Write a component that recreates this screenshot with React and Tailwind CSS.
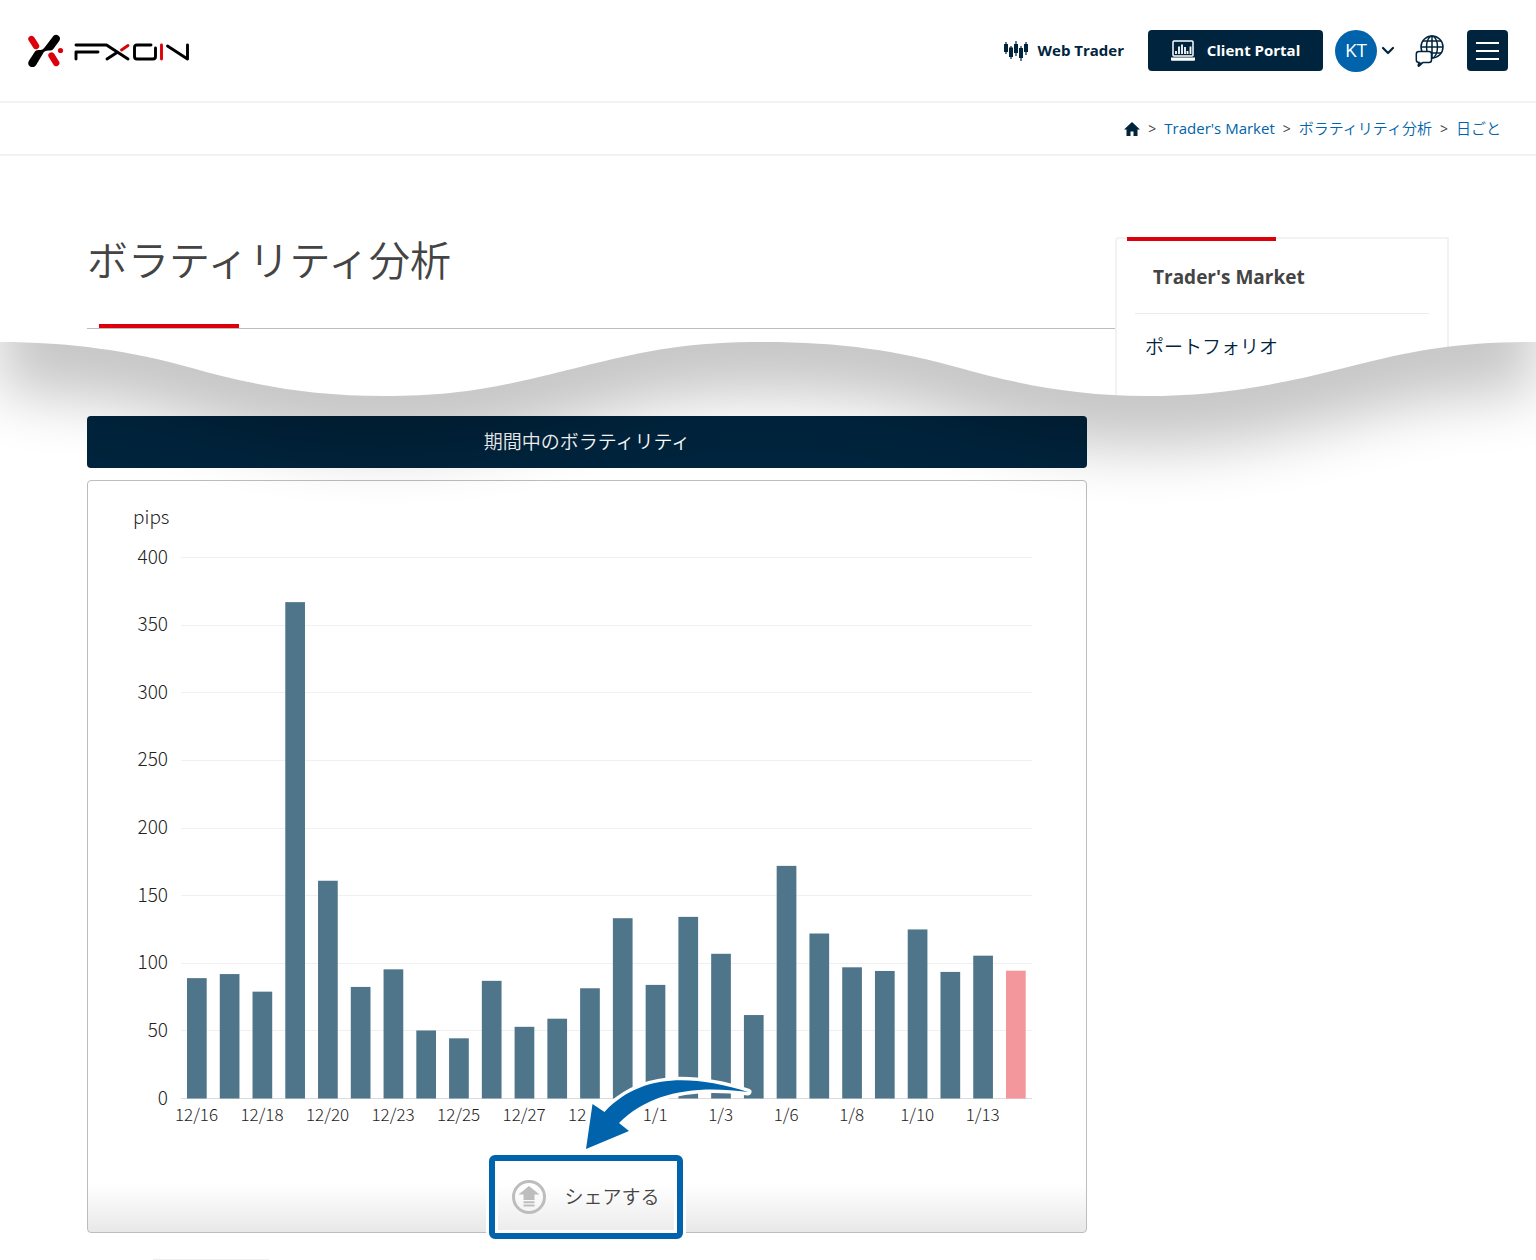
const bars = [
    { date: "12/16", pips: 89 },
    { date: "12/17", pips: 92 },
    { date: "12/18", pips: 79 },
    { date: "12/19", pips: 367 },
    { date: "12/20", pips: 161 },
    { date: "12/21", pips: 82.5 },
    { date: "12/23", pips: 95.5 },
    { date: "12/24", pips: 50.3 },
    { date: "12/25", pips: 44.5 },
    { date: "12/26", pips: 87 },
    { date: "12/27", pips: 53 },
    { date: "12/28", pips: 59 },
    { date: "12/30", pips: 81.5 },
    { date: "12/31", pips: 133.3 },
    { date: "1/1", pips: 84 },
    { date: "1/2", pips: 134.3 },
    { date: "1/3", pips: 107 },
    { date: "1/4", pips: 61.7 },
    { date: "1/6", pips: 172 },
    { date: "1/7", pips: 122 },
    { date: "1/8", pips: 97 },
    { date: "1/9", pips: 94.3 },
    { date: "1/10", pips: 125 },
    { date: "1/11", pips: 93.6 },
    { date: "1/13", pips: 105.6 },
    { date: "1/14", pips: 94.5 },
];

const ticks = [400, 350, 300, 250, 200, 150, 100, 50, 0];

const WAVE = "M0 0 C70 0 132 9 192 26 S310 54 384 54 S500 45 576 26 S690 0 765 0 S900 9 960 26 S1080 54 1146 54 S1270 45 1344 26 S1460 0 1536 0";

const Logo = () => (
    <svg viewBox="0 0 164 34" className="h-[34px] w-[164px]" fill="none" strokeLinecap="round" aria-label="FXON" role="img">
        <path d="M4.500 5l4.500 7" stroke="#dc000c" strokeWidth="6.4" />
        <path d="M24.500 21.5l4.7 7.5" stroke="#dc000c" strokeWidth="6.4" />
        <path d="M25.600 3C27 .8 29.200.2 31.200 1.400C33.400 2.800 33.500 5 32.200 7L26.500 14.800C25.300 16.400 24 16.600 21.500 16.600C18.500 16.600 17.200 17.400 16 19.500L9 31.200C7.500 33.200 5 33.600 3 32.400C.9 31 .7 28.500 2.100 26.500L7.500 18.300C8.400 16.800 9.600 16 11.500 16C15 16 16.300 15.300 17.800 13.200Z" fill="#000" />
        <circle cx="33.500" cy="16.500" r="2.600" fill="#dc000c" />
        <g stroke="#000" strokeWidth="2.900" strokeLinejoin="round">
            <path d="M49 11H79.500l21.500 14" />
            <path d="M49 25v-7H71" />
            <path d="M80 25l10-6.500" />
            <path d="M124 11h-14q-2.500 0-2.500 2.500v9q0 2.500 2.500 2.500h16q2.500 0 2.500-2.500V14" />
            <path d="M140.500 12l20 13V11" />
        </g>
        <path d="M94.500 16l6.500-4.500M134.500 11v14" stroke="#dc000c" strokeWidth="2.900" />
    </svg>
);

const CandleIcon = () => (
    <svg viewBox="0 0 24 20" className="h-5 w-6" fill="#00243d" stroke="#00243d">
        <path d="M2 1v12M7 5v13M12 0v15M17 5v15M22 1v13" strokeWidth="1.200" />
        <path d="M0 3h4v8H0zM5 6.500h4v9.500H5zM10 3h4v9h-4zM15 7h4v10h-4zM20 3h4v8h-4z" stroke="none" />
    </svg>
);

const LaptopIcon = () => (
    <svg viewBox="0 0 24 21" className="h-[21px] w-6" fill="none">
        <rect x="2" y="1" width="20" height="15" rx="1" stroke="#fff" strokeWidth="1.500" />
        <path d="M5 14v-3M8 14V6.500M11 14V4.500M14 14V7M16.500 14v-3M19.500 14V6.500" stroke="#fff" strokeWidth="1.800" />
        <path d="M0 17.500h24V20q0 .8-1 .8H1q-1 0-1-.8z" fill="#fff" />
    </svg>
);

const GlobeIcon = () => (
    <svg viewBox="0 0 30 32" className="h-8 w-[30px]" fill="none" stroke="#00243d" strokeWidth="1.500">
        <circle cx="17" cy="12" r="11" />
        <ellipse cx="17" cy="12" rx="5.500" ry="11" />
        <path d="M17 1v22M6 12h22M8 6h18M8 18h18" />
        <path d="M4 16.500h10q2.500 0 2.500 2.500v6q0 2.500-2.500 2.500H8L4 31q-1 .5-.8-.8l.8-2.700q-2.700 0-2.700-2.500v-6q0-2.500 2.700-2.500z" fill="#fff" />
        <path d="M3.500 27.500h5L3 31z" fill="#00243d" stroke="none" />
    </svg>
);

const ShareIcon = () => (
    <svg viewBox="0 0 34 34" className="size-[34px]" fill="#bdbdbd">
        <circle cx="17" cy="17" r="15.500" fill="none" stroke="#bdbdbd" strokeWidth="3" />
        <path d="M17 6l10.500 8.500H22.500V20h-11v-5.500H6.500zM11.500 21.300h11v2h-11zM11.500 24.600h11v2h-11z" />
    </svg>
);

const Header = () => (
    <header className="flex h-[103px] items-center justify-between border-b-2 border-[#f2f2f2] pl-[27px] pr-7">
        <a href="#home">
            <Logo />
        </a>
        <div className="flex items-center text-[15px] font-bold text-[#00243d]">
            <a href="#trader" className="flex items-center gap-2.5">
                <CandleIcon />
                Web Trader
            </a>
            <a href="#portal" className="ml-6 flex h-[41px] w-[175px] items-center justify-center gap-3 rounded bg-[#00243d] text-white">
                <LaptopIcon />
                Client Portal
            </a>
            <button className="ml-3 flex items-center gap-1" aria-label="KT">
                <span className="flex size-[42px] items-center justify-center rounded-full bg-[#0063ab] text-[19px] font-normal text-white">KT</span>
                <svg viewBox="0 0 14 10" className="h-[10px] w-[14px]" fill="none" stroke="#00243d" strokeWidth="2.200" strokeLinecap="round" strokeLinejoin="round">
                    <path d="M2 2l5 5 5-5" />
                </svg>
            </button>
            <button className="ml-5" aria-label="Language">
                <GlobeIcon />
            </button>
            <button className="ml-[22px] flex size-[41px] flex-col items-center justify-center gap-1.5 rounded bg-[#00243d]" aria-label="Menu">
                <span className="h-0.5 w-[23px] bg-white" />
                <span className="h-0.5 w-[23px] bg-white" />
                <span className="h-0.5 w-[23px] bg-white" />
            </button>
        </div>
    </header>
);

const Breadcrumb = () => (
    <nav className="flex h-[53px] items-center justify-end gap-2 border-b-2 border-[#f2f2f2] pr-[35px] text-[15px] text-[#0063ab]">
        <a href="#home" aria-label="Home">
            <svg viewBox="0 0 16 14" className="h-[14px] w-4" fill="#00243d">
                <path d="M8 0L16 7.500H13.500V14H9.500V9.500h-3V14h-4V7.500H0z" />
            </svg>
        </a>
        <span className="text-[14px] text-[#444]">&gt;</span>
        <a href="#market">Trader's Market</a>
        <span className="text-[14px] text-[#444]">&gt;</span>
        <a href="#volatility" className="font-[350]">ボラティリティ分析</a>
        <span className="text-[14px] text-[#444]">&gt;</span>
        <a href="#daily" className="font-[350]">日ごと</a>
    </nav>
);

const VolatilityChart = () => {
    const yFor = (v) => 617.5 - v * 1.3525;

    return (
        <svg viewBox="0 0 998 660" className="block h-auto w-full font-['Noto_Sans_CJK_JP',sans-serif] font-light" fill="#222">
            <text x="45" y="43" fontSize="19">pips</text>
            {ticks.map((t) => (
                <g key={t}>
                    <path d={`M93 ${Math.floor(yFor(t)) + 0.5}H944`} stroke={t === 0 ? "#dcdcdc" : "#f0f0f0"} />
                    <text x="80" y={yFor(t) + 6} fontSize="19" textAnchor="end">{t}</text>
                </g>
            ))}
            {bars.map((b, i) => (
                <rect
                    key={b.date}
                    x={99 + i * 32.76}
                    y={yFor(b.pips)}
                    width="19.700"
                    height={b.pips * 1.3525}
                    fill={i === bars.length - 1 ? "#f4979c" : "#4f758b"}
                />
            ))}
            {bars.map((b, i) => i % 2 === 0 && (
                <text key={b.date} x={108.5 + i * 32.76} y="640" fontSize="17" textAnchor="middle">{b.date}</text>
            ))}
        </svg>
    );
};

export default function App() {
    return (
        <div className="relative min-h-screen overflow-hidden bg-white font-['Open_Sans','Noto_Sans_CJK_JP',sans-serif] text-[#444]">
            <div className="relative">
                <Header />
                <Breadcrumb />
                <div className="grid h-[240px] grid-cols-[1fr_334px] overflow-hidden px-[87px] pt-[81px]">
                    <div>
                        <div className="h-[92px] border-b border-[#bdbdbd]">
                            <h1 className="h-[87px] font-['Noto_Sans_CJK_JP',sans-serif] text-[41px] leading-[42px] font-[350]">ボラティリティ分析</h1>
                            <div className="ml-3 h-1 w-[140px] bg-[#dc000c]" />
                        </div>
                    </div>
                    <aside className="h-[200px] rounded-tl border-2 border-[#f2f2f2] px-[18px]">
                        <div className="-mt-0.5 -ml-2 h-1 w-[149px] bg-[#dc000c]" />
                        <h2 className="border-b border-[#ebebeb] pt-5 pb-5 pl-[18px] text-[19px] leading-8 font-bold">Trader's Market</h2>
                        <a href="#portfolio" className="block pt-[17px] pl-2.5 text-[19px] leading-8 font-[350] text-[#00243d]">ポートフォリオ</a>
                    </aside>
                </div>
                {/* wavy page break */}
                <svg viewBox="0 0 1536 54" preserveAspectRatio="none" className="absolute bottom-0 left-0 h-[54px] w-full" fill="#fff">
                    <path d={`${WAVE}V54H0Z`} />
                </svg>
            </div>

            <div className="relative">
                <main className="grid grid-cols-[1fr_334px] gap-7 px-[87px] pt-5">
                    <div>
                        <h2 className="rounded bg-[#00243d] text-center text-[19px] leading-[52px] font-[350] text-white">期間中のボラティリティ</h2>
                        <section className="mt-3 rounded border border-[#bdbdbd] bg-linear-to-t from-[#e8e8e8] to-white to-[48px]">
                            <VolatilityChart />
                            <div className="relative -mb-[7px] flex justify-center pt-3.5 pr-0.5">
                                <button className="flex h-[84px] w-[194px] items-center justify-center gap-[18px] rounded-md border-[6px] border-[#0063ab] bg-linear-to-t from-[#ebebeb] to-white to-[48px] text-[19px] font-[350] ring-[3px] ring-white inset-ring-[3px] inset-ring-white">
                                    <ShareIcon />
                                    シェアする
                                </button>
                                <svg viewBox="0 0 180 90" className="absolute bottom-[78px] left-1/2 h-[90px] w-[180px] -translate-x-[7px]" fill="#0063ab">
                                    <path
                                        d="M6 78L12.500 33L24.500 41C60 3 110 3 168 21C115 14 70 21 39 52L49 60Z"
                                        stroke="#fff" strokeWidth="7" strokeLinejoin="round" paintOrder="stroke"
                                    />
                                </svg>
                            </div>
                        </section>
                        <div className="mt-[26px] ml-[66px] h-px w-[116px] bg-[#eee]" />
                    </div>
                </main>
                {/* shadow thrown by the torn edge */}
                <svg viewBox="0 0 1536 254" preserveAspectRatio="none" className="pointer-events-none absolute -top-[54px] left-0 h-[254px] w-full">
                    <defs>
                        <filter id="shade" x="-10%" y="-100%" width="120%" height="300%">
                            <feGaussianBlur stdDeviation="29" />
                        </filter>
                        <clipPath id="below">
                            <path d={`${WAVE}V254H0Z`} />
                        </clipPath>
                    </defs>
                    <g clipPath="url(#below)">
                        <g transform="translate(0 52)" opacity="0.220" filter="url(#shade)">
                            <path d={`${WAVE}V-150H0Z`} />
                        </g>
                    </g>
                </svg>
            </div>
        </div>
    );
}
